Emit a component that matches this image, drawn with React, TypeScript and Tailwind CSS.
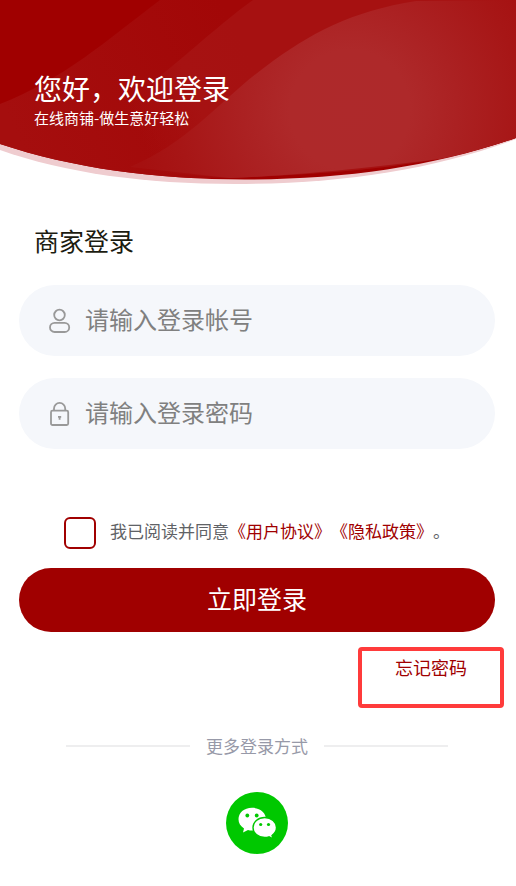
import React, { useState } from 'react';

const HeaderBackground: React.FC = () => (
  <svg
    viewBox="0 0 516 185"
    preserveAspectRatio="none"
    className="absolute inset-0 h-full w-full"
    aria-hidden="true"
  >
    <defs>
      <clipPath id="header-shape">
        <path d="M0 0H516V138C433 167 343 179.500 245 179.500C155 179.500 72 168 0 144Z" />
      </clipPath>
      <linearGradient id="band-left" x1="0" y1="100" x2="220" y2="0" gradientUnits="userSpaceOnUse">
        <stop offset="0" stopColor="#a50e0e" />
        <stop offset="1" stopColor="#a20707" />
      </linearGradient>
      <linearGradient id="band-middle" x1="130" y1="110" x2="250" y2="60" gradientUnits="userSpaceOnUse">
        <stop offset="0" stopColor="#a61212" stopOpacity="0" />
        <stop offset="0.5" stopColor="#a61212" />
        <stop offset="1" stopColor="#a61111" />
      </linearGradient>
      <radialGradient id="band-right" cx="350" cy="110" r="215" gradientUnits="userSpaceOnUse">
        <stop offset="0" stopColor="#ae292b" />
        <stop offset="0.28" stopColor="#ae292a" />
        <stop offset="0.5" stopColor="#ab2122" />
        <stop offset="0.8" stopColor="#a71616" />
        <stop offset="1" stopColor="#a51010" />
      </radialGradient>
    </defs>
    <path d="M0 140L516 137V139C433 170 340 184 235 184C145 184 65 173 0 150Z" fill="#efcccf" />
    <g clipPath="url(#header-shape)">
      <rect width="516" height="185" fill="#a00000" />
      <path d="M0 104C64 79 107 40 160 0H516V138C430 168 340 173 230 178H0Z" fill="url(#band-left)" />
      <path d="M253 0C210 31 183 61 125 102L80 166L230 178C340 173 430 168 516 138V0Z" fill="url(#band-middle)" />
      <path
        d="M130 167C190 142 220 100 265 67C310 33 352 11 416 1L516 0V138C480 150 460 155 440 159C390 165 310 175 230 178Z"
        fill="url(#band-right)"
      />
    </g>
  </svg>
);

const UserIcon: React.FC = () => (
  <svg viewBox="0 0 24 28" className="h-7 w-6 shrink-0" fill="none" stroke="#999" strokeWidth="1.8" aria-hidden="true">
    <circle cx="12.500" cy="8" r="5.300" />
    <rect x="3" y="15.800" width="19.200" height="9.200" rx="4.600" />
  </svg>
);

const LockIcon: React.FC = () => (
  <svg viewBox="0 0 24 28" className="h-7 w-6 shrink-0" fill="none" stroke="#999" strokeWidth="1.8" aria-hidden="true">
    <rect x="4" y="10.700" width="17.200" height="14.300" rx="1.500" />
    <path d="M7 10.700V8.500a5.600 5.600 0 0 1 11.200 0V10.700" />
    <path d="M11 16.800h3.200M12.600 16.500v3.200" />
  </svg>
);

const WechatIcon: React.FC = () => (
  <svg viewBox="0 0 62 62" className="h-[62px] w-[62px]" aria-hidden="true">
    <circle cx="31" cy="31" r="31" fill="#00c800" />
    <path
      d="M26 15.800C18 15.800 12.500 20.800 12.500 27.300C12.500 31 14.500 34.300 18 36.500L17 40.500L22 38C23.200 38.400 24.600 38.600 26 38.600C34 38.600 40 33.800 40 27.300C40 20.800 34 15.800 26 15.800Z"
      fill="#fff"
    />
    <path
      d="M38.700 25.500C32 25.500 27 30 27 35.500C27 41 32 45.500 38.700 45.500C40 45.500 41.500 45.300 43 44.800L47 46.800L46 43.500C48.700 41.500 50.500 38.700 50.500 35.500C50.500 30 45.300 25.500 38.700 25.500Z"
      fill="#fff"
      stroke="#00c800"
      strokeWidth="1.400"
    />
    <g fill="#00c800">
      <circle cx="21.300" cy="23.500" r="1.900" />
      <circle cx="30.700" cy="23.500" r="1.900" />
      <circle cx="34.700" cy="32.500" r="1.600" />
      <circle cx="42.500" cy="32.500" r="1.600" />
    </g>
  </svg>
);

interface FieldProps {
  id: string;
  label: string;
  type: string;
  value: string;
  onChange: (value: string) => void;
  icon: React.ReactNode;
}

const Field: React.FC<FieldProps> = ({ id, label, type, value, onChange, icon }) => (
  <div className="flex h-[71px] items-center gap-3.5 rounded-full bg-[#f5f7fb] px-7">
    <label htmlFor={id} aria-label={label}>
      {icon}
    </label>
    <input
      id={id}
      type={type}
      value={value}
      onChange={(e) => onChange(e.target.value)}
      placeholder={label}
      className="h-10 min-w-0 flex-1 bg-transparent pb-1 text-[24px] text-[#333] outline-none placeholder:text-[#808080]"
    />
  </div>
);

const App: React.FC = () => {
  const [account, setAccount] = useState<string>('');
  const [password, setPassword] = useState<string>('');
  const [agreed, setAgreed] = useState<boolean>(false);

  return (
    <div className="min-h-screen bg-white font-['Noto_Sans_CJK_SC',sans-serif] [text-spacing-trim:space-all]">
      <header className="relative h-[185px]">
        <HeaderBackground />
        <div className="relative px-[34px] pt-[70px] text-white">
          <h1 className="text-[28px] leading-9">您好，欢迎登录</h1>
          <p className="text-[15px] leading-6">在线商铺-做生意好轻松</p>
        </div>
      </header>

      <main className="pr-[21px] pb-8 pl-[19px]">
        <h2 className="mt-[35px] px-[15px] text-[25px] leading-10 text-[#1c1c10]">商家登录</h2>

        <form onSubmit={(e) => e.preventDefault()}>
          <div className="mt-[25px] flex flex-col gap-[22px]">
            <Field
              id="account"
              label="请输入登录帐号"
              type="text"
              value={account}
              onChange={setAccount}
              icon={<UserIcon />}
            />
            <Field
              id="password"
              label="请输入登录密码"
              type="password"
              value={password}
              onChange={setPassword}
              icon={<LockIcon />}
            />
          </div>

          {/* Agreement */}
          <div className="mt-[68px] flex items-start justify-center gap-3.5 text-[17px] leading-7 text-[#606266]">
            <input
              id="agree"
              type="checkbox"
              checked={agreed}
              onChange={(e) => setAgreed(e.target.checked)}
              className="h-8 w-8 shrink-0 appearance-none rounded-md border-2 border-[#a00000] checked:bg-[#a00000]"
            />
            <label htmlFor="agree">
              我已阅读并同意
              <a href="#agreement" className="text-[#a00000]">《用户协议》</a>
              <a href="#privacy" className="text-[#a00000]">《隐私政策》</a>。
            </label>
          </div>

          <button
            type="submit"
            className="mt-[19px] h-16 w-full rounded-full bg-[#a00000] pb-0.5 text-[25px] text-white"
          >
            立即登录
          </button>
        </form>

        <div className="-mr-[9px] mt-[15px] flex justify-end">
          <a
            href="#forgot"
            className="h-[61px] w-[146px] rounded border-4 border-[#ff3b3b] pt-1 text-center text-[18px] leading-6 text-[#a00000]"
          >
            忘记密码
          </a>
        </div>

        {/* Other login methods */}
        <div className="mx-[47px] mt-6 flex items-center gap-4 text-[17px] leading-7 text-[#9799a8]">
          <span className="h-0.5 flex-1 bg-[#eeeeef]" />
          <span>更多登录方式</span>
          <span className="h-0.5 flex-1 bg-[#eeeeef]" />
        </div>
        <div className="mt-8 flex justify-center">
          <button type="button" aria-label="微信登录">
            <WechatIcon />
          </button>
        </div>
      </main>
    </div>
  );
};

export default App;
